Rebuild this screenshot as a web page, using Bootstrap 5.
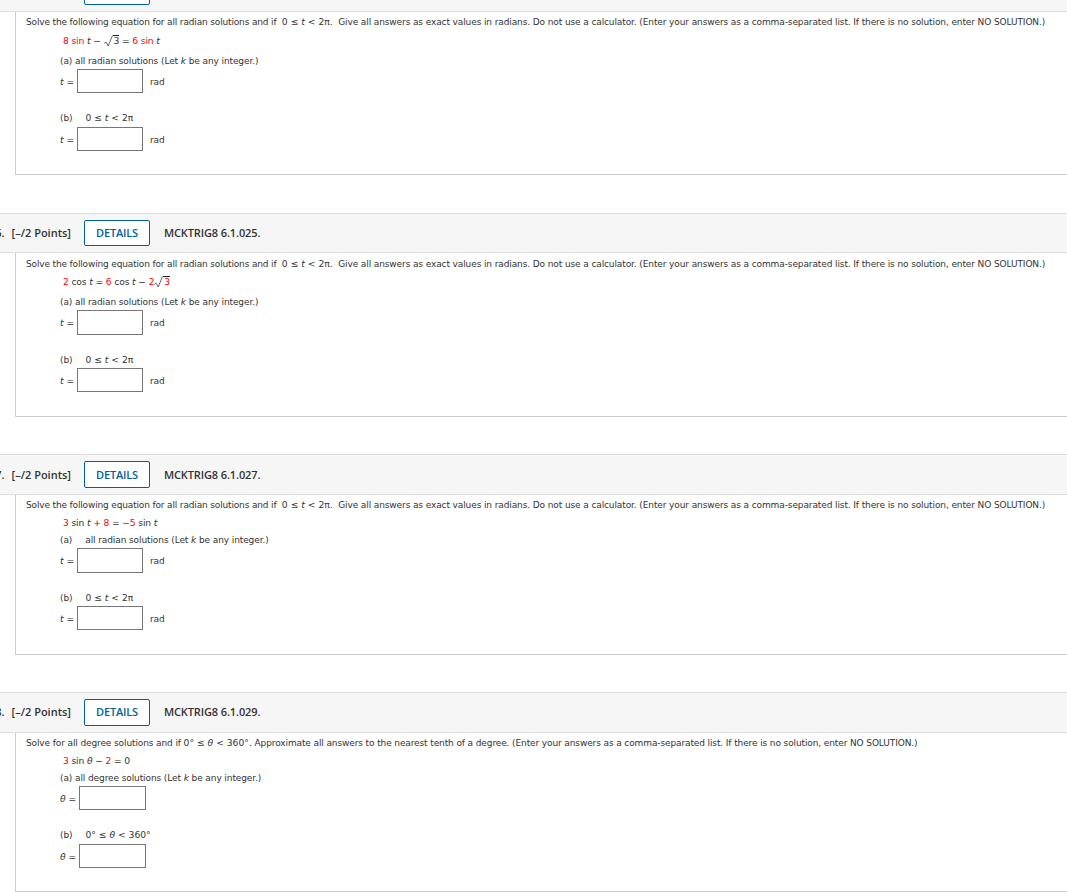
<!DOCTYPE html>
<html lang="en">
<head>
  <meta charset="utf-8">
  <title>Assignment</title>
  <link href="https://cdn.jsdelivr.net/npm/bootstrap@5.3.0/dist/css/bootstrap.min.css" rel="stylesheet">
  <style>
    body {
      font-family: "DejaVu Sans", Verdana, sans-serif;
      font-size: 9px;
      letter-spacing: -.1px;
      line-height: 16px;
      color: #333;
      overflow: hidden;
      white-space: nowrap;
    }
    .q-header {
      height: 41px;
      background-color: #f6f6f6;
      border-top: 1px solid #ddd;
      border-bottom: 1px solid #ddd;
      font-family: "Open Sans", sans-serif;
      font-size: 11px;
      font-weight: 600;
      letter-spacing: 0;
      color: #333;
    }
    .q-header.short { height: 40px; }
    .q-header.cut { height: 12px; border-top: 0; padding-bottom: 6px; }
    .q-header.last .q-label, .q-header.last .code-ref { padding-bottom: 1px; }
    .q-header.last .btn-details { line-height: 24px; padding-bottom: 1px; }
    .q-label { width: 71px; margin-right: 13px; }
    .q-no { margin-right: 7px; }
    .btn-details {
      width: 66px;
      height: 27px;
      padding: 0;
      margin-right: 14px;
      border: 1px solid #006298;
      border-radius: 2px;
      background-color: #fff;
      font-size: 11px;
      font-weight: 600;
      letter-spacing: -.15px;
      line-height: 25px;
      color: #006298;
    }
    .short .btn-details { height: 26px; line-height: 24px; }
    .code-ref { letter-spacing: -.12px; }
    .q-body {
      margin-left: 15px;
      padding-left: 10px;
      border-left: 1px solid #ccc;
      border-bottom: 1px solid #ccc;
      margin-bottom: 37px;
    }
    .q-body.first { margin-bottom: 38px; }
    .q-prompt { height: 20px; line-height: 20px; letter-spacing: -.11px; }
    .q-prompt.low { line-height: 22px; }
    .q-prompt .lead-in { letter-spacing: -.155px; }
    .q-prompt.deg { letter-spacing: -.115px; }
    .q-work { padding-left: 34px; }
    .eq, .mx { font-size: 9.2px; letter-spacing: 0; }
    .eq { padding-left: 3px; height: 16px; letter-spacing: -.15px; }
    .eq.tall { height: 19px; line-height: 18px; }
    .part-a { height: 17px; line-height: 18px; }
    .part-a.tall { height: 18px; line-height: 20px; }
    .part-b { height: 34px; padding-top: 17px; }
    .part-b.tight { height: 33px; }
    .answer { height: 24px; }
    .answer.tall { height: 25px; }
    .answer span { padding-top: 1px; }
    .answer.tall span { padding-top: 0; }
    .answer .var { width: 17px; }
    .answer.theta .var { width: 19px; }
    .answer input {
      width: 66px;
      height: 100%;
      margin-right: 7px;
      border: 1px solid #767676;
      border-radius: 0;
      background: #fff;
    }
    .answer.theta input { width: 67px; }
    .end { height: 24px; }
    .end.tight { height: 23px; }
    .num { color: #f00; }
    .sp { display: inline-block; width: 13px; }
    .root { vertical-align: -3px; }
    .rad { border-top: 1px solid #222; display: inline-block; line-height: 10px; padding-left: 1px; }
  </style>
</head>
<body class="bg-white">

  <!-- Question 5, header scrolled out of view -->
  <div class="q-header cut d-flex align-items-end overflow-hidden">
    <div class="q-label"></div>
    <button class="btn btn-details">DETAILS</button>
  </div>
  <div class="q-body first">
    <div class="q-prompt"><span class="lead-in">Solve the following equation for all radian solutions and if&nbsp; </span><span class="mx">0 ≤ <i>t</i> &lt; 2π.</span>&nbsp; Give all answers as exact values in radians. Do not use a calculator. (Enter your answers as a comma-separated list. If there is no solution, enter NO SOLUTION.)</div>
    <div class="q-work">
      <div class="eq tall"><span class="num">8</span> <span class="num">sin</span> <i>t</i> − <svg class="root" width="9" height="12" viewBox="0 0 9 12"><path d="M.3 8.2L2.2 7.2L4.2 11L8.5 .5" fill="none" stroke="#555" stroke-width=".9"/></svg><span class="rad">3</span> = <span class="num">6</span> <span class="num">sin</span> <i>t</i></div>
      <div class="part-a tall">(a) all radian solutions (Let <i>k</i> be any integer.)</div>
      <div class="answer d-flex align-items-center"><span class="var mx"><i>t</i> =</span><input type="text"><span>rad</span></div>
      <div class="part-b">(b)<span class="sp"></span><span class="mx">0 ≤ <i>t</i> &lt; 2π</span></div>
      <div class="answer d-flex align-items-center"><span class="var mx"><i>t</i> =</span><input type="text"><span>rad</span></div>
      <div class="end tight"></div>
    </div>
  </div>

  <!-- Question 6 -->
  <div class="q-header short d-flex align-items-center">
    <div class="q-label d-flex justify-content-end"><span class="q-no">6.</span>[–/2 Points]</div>
    <button class="btn btn-details">DETAILS</button>
    <span class="code-ref">MCKTRIG8 6.1.025.</span>
  </div>
  <div class="q-body">
    <div class="q-prompt low"><span class="lead-in">Solve the following equation for all radian solutions and if&nbsp; </span><span class="mx">0 ≤ <i>t</i> &lt; 2π.</span>&nbsp; Give all answers as exact values in radians. Do not use a calculator. (Enter your answers as a comma-separated list. If there is no solution, enter NO SOLUTION.)</div>
    <div class="q-work">
      <div class="eq tall"><span class="num">2</span> cos <i>t</i> = <span class="num">6</span> cos <i>t</i> − <span class="num">2</span><svg class="root" width="9" height="12" viewBox="0 0 9 12"><path d="M.3 8.2L2.2 7.2L4.2 11L8.5 .5" fill="none" stroke="#555" stroke-width=".9"/></svg><span class="rad num">3</span></div>
      <div class="part-a tall">(a) all radian solutions (Let <i>k</i> be any integer.)</div>
      <div class="answer tall d-flex align-items-center"><span class="var mx"><i>t</i> =</span><input type="text"><span>rad</span></div>
      <div class="part-b tight">(b)<span class="sp"></span><span class="mx">0 ≤ <i>t</i> &lt; 2π</span></div>
      <div class="answer d-flex align-items-center"><span class="var mx"><i>t</i> =</span><input type="text"><span>rad</span></div>
      <div class="end"></div>
    </div>
  </div>

  <!-- Question 7 -->
  <div class="q-header d-flex align-items-center">
    <div class="q-label d-flex justify-content-end"><span class="q-no">7.</span>[–/2 Points]</div>
    <button class="btn btn-details">DETAILS</button>
    <span class="code-ref">MCKTRIG8 6.1.027.</span>
  </div>
  <div class="q-body">
    <div class="q-prompt"><span class="lead-in">Solve the following equation for all radian solutions and if&nbsp; </span><span class="mx">0 ≤ <i>t</i> &lt; 2π.</span>&nbsp; Give all answers as exact values in radians. Do not use a calculator. (Enter your answers as a comma-separated list. If there is no solution, enter NO SOLUTION.)</div>
    <div class="q-work">
      <div class="eq"><span class="num">3</span> sin <i>t</i> + <span class="num">8</span> = <span class="num">−5</span> sin <i>t</i></div>
      <div class="part-a">(a)<span class="sp"></span>all radian solutions (Let <i>k</i> be any integer.)</div>
      <div class="answer tall d-flex align-items-center"><span class="var mx"><i>t</i> =</span><input type="text"><span>rad</span></div>
      <div class="part-b tight">(b)<span class="sp"></span><span class="mx">0 ≤ <i>t</i> &lt; 2π</span></div>
      <div class="answer d-flex align-items-center"><span class="var mx"><i>t</i> =</span><input type="text"><span>rad</span></div>
      <div class="end"></div>
    </div>
  </div>

  <!-- Question 8 -->
  <div class="q-header last d-flex align-items-center">
    <div class="q-label d-flex justify-content-end"><span class="q-no">8.</span>[–/2 Points]</div>
    <button class="btn btn-details">DETAILS</button>
    <span class="code-ref">MCKTRIG8 6.1.029.</span>
  </div>
  <div class="q-body mb-0">
    <div class="q-prompt deg">Solve for all degree solutions and if <span class="mx">0° ≤ <i>θ</i> &lt; 360°.</span> Approximate all answers to the nearest tenth of a degree. (Enter your answers as a comma-separated list. If there is no solution, enter NO SOLUTION.)</div>
    <div class="q-work">
      <div class="eq"><span class="num">3</span> sin <i>θ</i> − <span class="num">2</span> = 0</div>
      <div class="part-a">(a) all degree solutions (Let <i>k</i> be any integer.)</div>
      <div class="answer theta d-flex align-items-center"><span class="var mx"><i>θ</i> =</span><input type="text"></div>
      <div class="part-b">(b)<span class="sp"></span><span class="mx">0° ≤ <i>θ</i> &lt; 360°</span></div>
      <div class="answer theta d-flex align-items-center"><span class="var mx"><i>θ</i> =</span><input type="text"></div>
      <div class="end tight"></div>
    </div>
  </div>

  <script src="https://cdn.jsdelivr.net/npm/bootstrap@5.3.0/dist/js/bootstrap.bundle.min.js"></script>
</body>
</html>
